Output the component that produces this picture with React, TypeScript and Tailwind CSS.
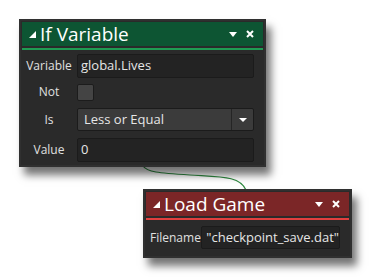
export default function App() {
  return (
    <div className="relative w-[371px] h-[277px] bg-white overflow-hidden font-['Open_Sans',sans-serif]">
      <svg className="absolute left-0 top-0" width="371" height="277">
        <path d="M143 166 C 147 172, 158 173, 190 175 S 240 176, 246 190" fill="none" stroke="#2f8a40" strokeWidth="1.2" />
      </svg>

      <div className="absolute left-[19px] top-[19px] w-[247px] h-[148px] bg-[#2a2a2a] border-2 border-[#303030] shadow-[5px_8px_8px_rgba(0,0,0,0.55)] flex flex-col">
        <Header title="If Variable" bg="bg-[#0d5533]" stripe="bg-[#1f9c53]" />
        <div className="flex flex-col pt-[4px] pr-[10px]">
          <div className="flex items-center h-[24px]">
            <Label text="Variable" />
            <div className="flex-1 h-[24px] bg-[#232323] border border-[#1b1b1b] rounded-[2px] flex items-center pl-[3px] text-[13px] text-[#e6e6e6]">
              global.Lives
            </div>
          </div>
          <div className="flex items-center h-[16px] mt-[6px]">
            <Label text="Not" />
            <div className="w-[17px] h-[17px] bg-[#444444] border border-[#1c1c1c] rounded-[2px]" />
          </div>
          <div className="flex items-center h-[23px] mt-[8px]">
            <Label text="Is" />
            <div className="flex-1 h-[23px] bg-[#3b3b3b] border border-[#1b1b1b] rounded-[2px] flex items-center">
              <span className="flex-1 pl-[6px] text-[13px] text-[#e6e6e6]">Less or Equal</span>
              <div className="w-[22px] h-full border-l border-[#252525] flex items-center justify-center">
                <span className="w-0 h-0 border-l-[4px] border-r-[4px] border-t-[4px] border-l-transparent border-r-transparent border-t-white" />
              </div>
            </div>
          </div>
          <div className="flex items-center h-[24px] mt-[7px]">
            <Label text="Value" />
            <div className="flex-1 h-[24px] bg-[#232323] border border-[#1b1b1b] rounded-[2px] flex items-center pl-[3px] text-[13px] text-[#e6e6e6]">
              0
            </div>
          </div>
        </div>
      </div>

      <div className="absolute left-[143px] top-[189px] w-[209px] h-[69px] bg-[#2a2a2a] border-2 border-[#303030] shadow-[5px_8px_8px_rgba(0,0,0,0.55)] flex flex-col">
        <Header title="Load Game" bg="bg-[#7b2627]" stripe="bg-[#e1403f]" />
        <div className="flex items-center pt-[6px] pl-[5px] pr-[10px]">
          <span className="w-[57px] text-[12px] text-[#e0e0e0]">Filename</span>
          <div className="flex-1 h-[23px] bg-[#232323] border border-[#1b1b1b] rounded-[2px] flex items-center pl-[4px] text-[13px] text-[#e6e6e6]">
            "checkpoint_save.dat"
          </div>
        </div>
      </div>
    </div>
  );
}

function Label({ text }: { text: string }) {
  return <span className="w-[56px] text-center text-[12px] text-[#e0e0e0]">{text}</span>;
}

function Header({ title, bg, stripe }: { title: string; bg: string; stripe: string }) {
  return (
    <>
      <div className={`${bg} h-[24px] mx-[1px] mt-[1px] flex items-center pl-[7px] pr-[9px]`}>
        <svg width="7" height="7" viewBox="0 0 7 7" className="mt-[1px]">
          <path d="M7 0 L7 7 L0 7 Z" fill="#ffffff" />
        </svg>
        <span className="ml-[4px] flex-1 text-[19px] leading-none text-white">{title}</span>
        <svg width="8" height="5" viewBox="0 0 8 5">
          <path d="M0 0 L8 0 L4 5 Z" fill="#ffffff" />
        </svg>
        <svg width="8" height="8" viewBox="0 0 8 8" className="ml-[9px]">
          <path d="M1 1 L7 7 M7 1 L1 7" stroke="#ffffff" strokeWidth="2" />
        </svg>
      </div>
      <div className={`${stripe} h-[2px] mx-[1px] mt-[2px]`} />
    </>
  );
}
